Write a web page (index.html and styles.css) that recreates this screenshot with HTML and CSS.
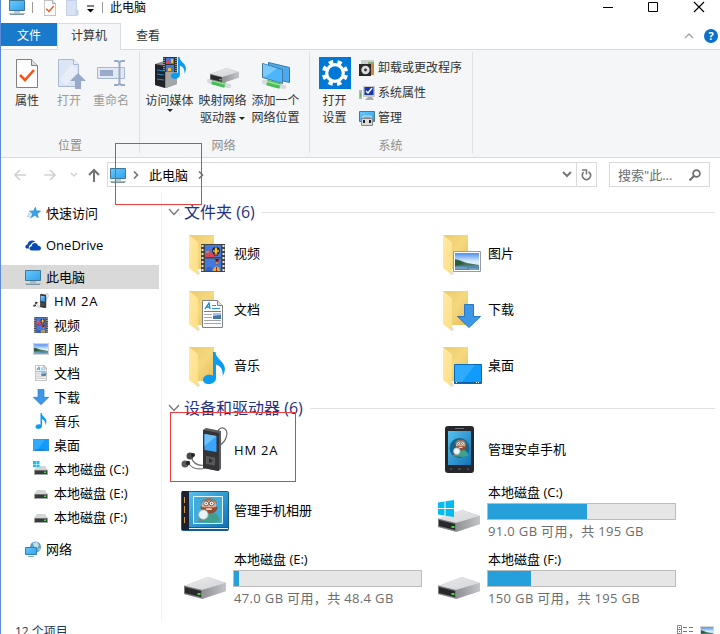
FILE: index.html
```
<!DOCTYPE html>
<html lang="zh-CN">
<head>
    <meta charset="utf-8">
    <title>此电脑</title>
    <link rel="stylesheet" href="styles.css">
</head>
<body>
    <!-- shared icons -->
    <svg class="sprite" width="0" height="0">
        <defs>
            <linearGradient id="screen" x1="0" y1="0" x2="1" y2="1">
                <stop offset="0" stop-color="#68c8fb"/><stop offset=".5" stop-color="#4db5f5"/><stop offset="1" stop-color="#2da3f0"/>
            </linearGradient>
            <linearGradient id="fback" x1="0" y1="0" x2="1" y2="1">
                <stop offset="0" stop-color="#eccb6c"/><stop offset=".5" stop-color="#f5d87e"/><stop offset="1" stop-color="#e3ba59"/>
            </linearGradient>
            <linearGradient id="fflap" x1="0" y1="0" x2="1" y2="1">
                <stop offset="0" stop-color="#ffe9a5"/><stop offset="1" stop-color="#fcdf85"/>
            </linearGradient>
            <linearGradient id="metal" x1="0" y1="0" x2="1" y2="1">
                <stop offset="0" stop-color="#e9e9eb"/><stop offset="1" stop-color="#d4d5d9"/>
            </linearGradient>
            <linearGradient id="side" x1="0" y1="0" x2="1" y2="0">
                <stop offset="0" stop-color="#8f9094"/><stop offset="1" stop-color="#c4c5c8"/>
            </linearGradient>
            <linearGradient id="sky" x1="0" y1="0" x2="0" y2="1">
                <stop offset="0" stop-color="#4f8ff0"/><stop offset=".5" stop-color="#d9ecfb"/>
            </linearGradient>
            <linearGradient id="cover" x1="0" y1="0" x2="1" y2="1">
                <stop offset="0" stop-color="#56c1ee"/><stop offset="1" stop-color="#1272b4"/>
            </linearGradient>
        </defs>

        <symbol id="pc" viewBox="0 0 16 16">
            <path d="M.5 1.500h15v10H.5z" fill="url(#screen)" stroke="#3f7896"/>
            <path d="M5 13h6M1 15.500h14" stroke="#7896a8"/><path d="M0 14.500h16" stroke="#a9bdca"/>
        </symbol>
        <symbol id="star" viewBox="0 0 16 16">
            <path d="M9.500 1.500l1.300 4.100 4.700.2-3.700 2.800 1 4.700-3.800-2.600-4.200 2.400 1.500-4.300L3 5.700l4.500-.1z" fill="#35a3ea" stroke="#1b83cd" stroke-width=".7"/>
            <path d="M2 6.500h3M1 9h4M0 11.500h4M3 13.500h2" stroke="#5bbdf2"/>
        </symbol>
        <symbol id="cloud" viewBox="0 0 16 16">
            <path d="M1.500 11.500C-.3 11 0 7.500 2.600 7.500 2.800 4 7.500 2 10.300 5 7.800 4.800 6.300 6 5.800 7.800 3.700 8.200 3.500 10.500 4.300 11.500z" fill="#094ab2"/>
            <path d="M6.500 13.500C3.600 13.300 4 9.300 6.700 9.200 7 5.200 12.300 4.800 13 8.700 16.500 8.500 17 13 14 13.500z" fill="#094ab2"/>
        </symbol>
        <symbol id="player" viewBox="0 0 48 48">
            <path d="M35 13c0-9 5-13 9-10s1 13-5 16" fill="none" stroke="#6c6c6c" stroke-width="1.200"/>
            <path d="M6 36c6 8 12 8 18 6M10 30c2 8 8 10 14 9" fill="none" stroke="#777" stroke-width="1.200"/>
            <path d="M22 4l3-2 15 3v38l-3 2-15-3z" fill="#5b5b5d"/>
            <path d="M22 4l16 3v38l-16-3z" fill="#343436"/>
            <path d="M23.500 8l12 2v16l-12-2z" fill="#3ba5fa"/><path d="M23.500 8l12 2-12 10z" fill="#6fc0fb"/>
            <path d="M25 30l9 1.500v8L25 38z" fill="#59595b"/><path d="M28 32l4 3-4 2z" fill="#29292a"/>
            <circle cx="9" cy="30" r="3.500" fill="#4b4b4b"/><circle cx="12" cy="29" r="2" fill="#222"/>
            <circle cx="4" cy="38" r="3.500" fill="#5a5a5a"/><circle cx="7" cy="37" r="2.200" fill="#262626"/>
        </symbol>
        <symbol id="film" viewBox="0 0 24 28" preserveAspectRatio="none">
            <path d="M0 0h24v28H0z" fill="#444"/>
            <path d="M1.500 1v27M22.500 1v27" stroke="#e4e4e4" stroke-width="2" stroke-dasharray="2 2"/>
            <path d="M4 1h16v12H4zM4 14.500h16V27H4z" fill="#4479dc"/>
            <path d="M4 9l3-3 4 3 3 4H4z" fill="#d84458"/><path d="M5 8h3" stroke="#6ed7a2"/>
            <path d="M15 3a4 4 0 0 1 4 4c0 2-2 3-2.500 5h-3C13 10 11 9 11 7a4 4 0 0 1 4-4z" fill="#262530"/>
            <path d="M15 3c-2 2-2 6 0 9 2-3 2-7 0-9z" fill="#f4c631"/><path d="M12 7h1.500M16.500 7H18" stroke="#f4c631" stroke-width="1.500"/><path d="M13 10h4" stroke="#d43c30"/>
            <path d="M13 15h6l-1.500 3-1.500 3-1.500-3z" fill="#ce362e"/><path d="M14 15h4l-2 3z" fill="#262530"/><path d="M15.500 18h1v2h-1z" fill="#f4c631"/>
            <path d="M5 25c1-3 5-3 6 0v2H5z" fill="#3461b8"/><path d="M12 27c0-6 7-6 7 0z" fill="#e5b529"/><path d="M15 23h1v4h-1z" fill="#b22b2b"/>
        </symbol>
        <symbol id="photo" viewBox="0 0 28 21" preserveAspectRatio="none">
            <path d="M.5.500h27v20H.5z" fill="#fff" stroke="#9b9b9b"/>
            <path d="M2 2h24v17H2z" fill="url(#sky)"/>
            <path d="M2 8l4 1 8 3 12 2v2H2z" fill="#48725a"/><path d="M2 9l5 1 4 3-9 2z" fill="#2c5a3d"/>
            <path d="M2 15l24-1v5H2z" fill="#5588ae"/><path d="M2 17h12M16 18h9" stroke="#8db5cf"/>
        </symbol>
        <symbol id="doc" viewBox="0 0 21 28" preserveAspectRatio="none">
            <path d="M.5.500h15l5 5v22H.5z" fill="#fdfdfd" stroke="#808284"/><path d="M15.500.500v5h5" fill="#e3e3e3" stroke="#808284"/>
            <path d="M3 9l4-6 1 6M4 7h4" stroke="#1b84d1" stroke-width="1.300" fill="none"/><path d="M10 5.500h4M10 8.500h8M2 11.500h17" stroke="#2a92d8"/>
            <path d="M2 14.500h8M2 17.500h8M2 20.500h17M2 23.500h17" stroke="#a6a6a6"/><path d="M11 13h8v6h-8z" fill="#4176a5"/><path d="M11 13h8v2l-8 1z" fill="#9fc7eb"/>
        </symbol>
        <symbol id="down" viewBox="0 0 24 24">
            <path d="M7.500.500h9v12h7L12 23.500.500 12.500h7z" fill="#3e97e6" stroke="#2478c5"/>
        </symbol>
        <symbol id="note" viewBox="0 0 22 32">
            <path d="M10 0h2.500c.5 7 8.500 9 9.300 16 .3 3-.8 6-2.300 8 1-6-2-10-6.500-11.500V26c0 4-4 6-7.500 6S0 30 0 27.500C0 23.500 6 21.500 10 23.500z" fill="#0a9bf3"/>
        </symbol>
        <symbol id="desk" viewBox="0 0 28 20" preserveAspectRatio="none">
            <path d="M.5.500h27v19H.5z" fill="#119bfb" stroke="#0a6ab5"/><path d="M1 1h20L8 18H1z" fill="#2faafc"/><path d="M1 18.500h26" stroke="#0860a5"/><path d="M2 18.500h1M22 18.500h4" stroke="#fff" stroke-dasharray="1 1"/>
        </symbol>
        <symbol id="drive" viewBox="0 0 42 22">
            <path d="M0 9L24 0l18 6v8L18 22 0 17z" fill="#b5b6ba"/>
            <path d="M0 9L24 0l18 6-24 7z" fill="url(#metal)"/><path d="M18 13l24-7v8l-24 8z" fill="url(#side)"/>
            <path d="M0 8.500l18 4.500v8.500L0 17z" fill="#7d7e80"/><path d="M1 10l16 4v6L1 16z" fill="#29292b"/>
            <path d="M13.500 16h3v2h-3z" fill="#3fdd3a"/>
        </symbol>
        <symbol id="minidrive" viewBox="0 0 16 16">
            <path d="M4 5h8l3 4H1z" fill="#d3d4d6"/><path d="M1 9h14v5H1z" fill="#a3a4a7"/><path d="M2 9.500h12V13H2z" fill="#38393b"/><path d="M11 10.500h2v1.500h-2z" fill="#3be144"/>
        </symbol>
        <symbol id="winlogo" viewBox="0 0 16 17">
            <path d="M0 2.500L6.500 1.500v6.500H0zM7.500 1.300L16 0v8H7.500zM0 9h6.500v6.500L0 14.500zM7.500 9H16v8l-8.500-1.300z" fill="#00bcf2"/>
        </symbol>
        <symbol id="net" viewBox="0 0 16 16">
            <circle cx="10.500" cy="6" r="5.500" fill="#5ba0c6"/><path d="M8 2l4-1 2 3-2 4-3-2zM13 8l2-1-1 3z" fill="#c2dfe8"/>
            <path d="M.5 6.500h11v7H.5z" fill="url(#screen)" stroke="#2d83b8"/><path d="M3 15.500h6" stroke="#83aabd"/>
        </symbol>
        <symbol id="folder" viewBox="0 0 48 48">
            <path d="M8 5h25v34H12z" fill="url(#fback)"/><path d="M16 38l3 6-3 1z" fill="#ddd"/><path d="M8 5l9 7v33l-9-7z" fill="url(#fflap)"/>
        </symbol>
        <symbol id="checkdoc" viewBox="0 0 22 29">
            <path d="M.5.500h15l6 6v22H.5z" fill="#fdfdfd" stroke="#7e8082"/><path d="M15.500.500v6h6" fill="#ddd" stroke="#7e8082"/>
            <path d="M4 16l5 5 9-10" fill="none" stroke="#f0571c" stroke-width="2.600"/>
        </symbol>
        <symbol id="plug" viewBox="0 0 24 10">
            <path d="M2 3l20 5" stroke="#d8dbdd" stroke-width="4.500" stroke-linecap="round"/><path d="M5 3.500l13 3.500" stroke="#48bd55" stroke-width="5.500"/><path d="M5 2.500l13 3.500" stroke="#93e79c" stroke-width="1.500"/>
        </symbol>
        <symbol id="geezer" viewBox="0 0 28 28">
            <path d="M4 27c1-8 6-11 12-11s10 4 11 10l-8 2z" fill="#40a08b"/>
            <circle cx="15" cy="9" r="7.500" fill="#e9b393"/><path d="M6 8c0-9 18-9 18 0l-3-4H9z" fill="#8c7266"/>
            <path d="M6 10c3 2 5 1 9 1s6 1 9-1c1 5-4 8-9 8S6 15 6 10z" fill="#914b33"/>
            <circle cx="12" cy="7" r="2.600" fill="#fff" stroke="#66513f"/><circle cx="18" cy="7" r="2.600" fill="#fff" stroke="#66513f"/><path d="M11.500 7h1M17.500 7h1" stroke="#222" stroke-width="1.500"/>
            <path d="M12 13h6" stroke="#f2cbb3" stroke-width="2"/>
            <circle cx="9" cy="19" r="5.200" fill="#e8f4f6" stroke="#9aa9ad"/><path d="M6 24l-2 3" stroke="#bc6d43" stroke-width="2"/>
        </symbol>
        <symbol id="chev" viewBox="0 0 12 8"><path d="M1 1l5 5.500L11 1" fill="none" stroke="currentColor" stroke-width="1.300"/></symbol>
        <symbol id="next" viewBox="0 0 6 8"><path d="M1 .5L4.500 4 1 7.500" fill="none" stroke="currentColor" stroke-width="1.700"/></symbol>
    </svg>

    <div class="window">
        <div class="titlebar">
            <svg class="t-pc" width="16" height="16"><use href="#pc"/></svg>
            <span class="t-sep"></span>
            <svg class="t-check" width="12" height="16"><use href="#checkdoc"/></svg>
            <svg class="t-new" width="13" height="16"><path d="M.5.500h10v15H.5z" fill="#d7e3f5" stroke="#c3d2ea"/><path d="M9.500 9.500h3v6h-3z" fill="#c3d2ea"/></svg>
            <svg class="t-drop" width="7" height="8"><path d="M0 1h7" stroke="#000" stroke-width="1"/><path d="M0 4h7L3.500 7.500z"/></svg>
            <span class="t-sep"></span>
            <span class="title">此电脑</span>
            <svg class="controls" width="102" height="12"><path d="M0 6.500h10M45.500 1.500h9v9h-9z" fill="none" stroke="#000"/><path d="M91 1l10 10M101 1L91 11" stroke="#000" stroke-width="1.200"/></svg>
        </div>

        <div class="tabs">
            <span class="tab file">文件</span>
            <span class="tab active">计算机</span>
            <span class="tab">查看</span>
            <svg class="collapse" width="10" height="6"><path d="M1 5l4-4 4 4" fill="none" stroke="#a5a5a5" stroke-width="1.300"/></svg>
            <span class="help">?</span>
        </div>

        <div class="ribbon">
            <div class="group location">
                <div class="buttons">
                    <div class="big">
                        <svg width="32" height="32"><use href="#checkdoc" x="5" y="2" width="22" height="29"/></svg>
                        <span>属性</span>
                    </div>
                    <div class="big off">
                        <svg width="32" height="32"><path d="M5.500 2.500h15l5 5v22h-20z" fill="#dce5f3" stroke="#a9b9d5"/><path d="M20.500 2.500v5h5" fill="#edf2fa" stroke="#a9b9d5"/><path d="M7 22L19 7l5 5v9L12 28z" fill="#e8eef8"/><path d="M25 16l8 8h-5v8h-6v-8h-5z" fill="#98a9c9"/></svg>
                        <span>打开</span>
                    </div>
                    <div class="big off">
                        <svg width="32" height="32"><path d="M2.500 10.500h27v11h-27z" fill="#e2e9f5" stroke="#a8b7d3"/><path d="M5 13h13v6H5z" fill="#9aabca"/><path d="M19 4h3q2 0 2.500 2Q25 4 27 4h3M24.500 4v24M19 28h3q2 0 2.500-2 .5 2 2.500 2h3" fill="none" stroke="#99a9c8" stroke-width="2"/></svg>
                        <span>重命名</span>
                    </div>
                </div>
                <div class="caption">位置</div>
            </div>
            <div class="group network">
                <div class="buttons">
                    <div class="big">
                        <svg width="32" height="32"><path d="M1 7l12-4 10 3v21l-11 4-11-3z" fill="#88898b"/><path d="M1 7l10 2v22L1 28z" fill="#212329"/><path d="M12 9l11-3v21l-11 4z" fill="#a3a5a7"/><path d="M3 13l7 1M3 17l7 1M3 22l7 1" stroke="#2788ce"/><path d="M9 0h14v15H9z" fill="#333"/><path d="M10 1v14M22 1v14" stroke="#ddd" stroke-dasharray="1 1"/><path d="M12 1h8v6h-8zM12 8h8v7h-8z" fill="#4479dc"/><path d="M12 5l3-2 2 4h-5z" fill="#d84458"/><path d="M17 2h2v4h-2zM14 11h3v3h-3z" fill="#edc23a"/><use href="#note" x="17" y="0" width="15" height="22"/></svg>
                        <span>访问媒体</span>
                        <i class="arrow"></i>
                    </div>
                    <div class="big">
                        <svg width="32" height="32"><use href="#plug" x="0" y="21" width="24" height="10"/><use href="#drive" x="3" y="10" width="29" height="17"/></svg>
                        <span>映射网络</span>
                        <span>驱动器 <i class="arrow inline"></i></span>
                    </div>
                    <div class="big">
                        <svg width="32" height="32"><path d="M8.500 5.500l21 5v15l-21-5z" fill="#49aaf1" stroke="#397ba5"/><path d="M2.500 6.500l20 6v14l-20-6z" fill="#4db5fb" stroke="#46799b"/><path d="M3 7l14 4.500L5 20l-2-1z" fill="#7bcafc"/><use href="#plug" x="2" y="22" width="24" height="10"/></svg>
                        <span>添加一个</span>
                        <span>网络位置</span>
                    </div>
                </div>
                <div class="caption">网络</div>
            </div>
            <div class="group system">
                <div class="buttons">
                    <div class="big">
                        <svg width="32" height="32"><path d="M0 0h32v32H0z" fill="#0078d7"/><circle cx="16" cy="16" r="8.300" fill="none" stroke="#fff" stroke-width="3.200"/><circle cx="16" cy="16" r="11.300" fill="none" stroke="#fff" stroke-width="3.600" stroke-dasharray="4.440 4.440" stroke-dashoffset="-2.200"/></svg>
                        <span>打开</span>
                        <span>设置</span>
                    </div>
                    <div class="smalls">
                        <div class="small"><svg width="16" height="16"><path d="M2 0h13v10H2z" fill="#c8cfca"/><path d="M9 2h6v13H9z" fill="#83ab75"/><path d="M12 4h3v11h-3z" fill="#d4853b"/><path d="M0 4h12v12H0z" fill="#292929"/><circle cx="6.500" cy="10" r="4.200" fill="#ddd"/><circle cx="6.500" cy="10" r="1.400" fill="#333"/></svg>卸载或更改程序</div>
                        <div class="small"><svg width="16" height="16"><path d="M0 5h3v9H0z" fill="#b1b7b4"/><path d="M1 8h1v4H1z" fill="#66b453"/><path d="M4 1h12v11H4z" fill="#cacac8"/><path d="M5.500 2h9v8h-9z" fill="#1737b2"/><path d="M7 6l2 2 4-5" fill="none" stroke="#fff" stroke-width="1.500"/><path d="M9 12h4l2 3H6z" fill="#aaa"/></svg>系统属性</div>
                        <div class="small"><svg width="16" height="16"><path d="M.5 1.500h15v10H.5z" fill="url(#screen)" stroke="#427c9d"/><path d="M4 8V6h8v2" fill="none" stroke="#ddd"/><path d="M2.500 8.500h11v7h-11z" fill="#d9d9d9" stroke="#85898b"/><path d="M5 10v3M11 10v3" stroke="#222" stroke-width="2"/></svg>管理</div>
                    </div>
                </div>
                <div class="caption">系统</div>
            </div>
        </div>

        <div class="navbar">
            <svg class="arrows" width="88" height="14">
                <path d="M12 7H1M6 2L1 7l5 5M30 7h11M36 2l5 5-5 5" fill="none" stroke="#d2d2d2" stroke-width="1.700"/>
                <path d="M57 5l3 3 3-3" fill="none" stroke="#d2d2d2" stroke-width="1.500"/>
                <path d="M80 14V2M75 7l5-5 5 5" fill="none" stroke="#737373" stroke-width="2"/>
            </svg>
            <div class="address">
                <svg width="16" height="16"><use href="#pc"/></svg>
                <svg class="crumb" width="6" height="8"><use href="#next"/></svg>
                <span>此电脑</span>
                <svg class="crumb last" width="6" height="8"><use href="#next"/></svg>
                <svg class="history" width="10" height="7"><path d="M1 1l4 4 4-4" fill="none" stroke="#777" stroke-width="2"/></svg>
                <div class="refresh"><svg width="11" height="12"><path d="M7.500 2.700a4.200 4.200 0 1 1-4.800.5" fill="none" stroke="#777" stroke-width="1.700"/><path d="M1 1h4.500v4.500" fill="none" stroke="#777" stroke-width="1.500"/></svg></div>
            </div>
            <div class="search">
                <span>搜索"此...</span>
                <svg width="12" height="12"><circle cx="7.500" cy="4.500" r="3.400" fill="none" stroke="#6e6e6e" stroke-width="1.800"/><path d="M5 7l-4.500 4.500" stroke="#6e6e6e" stroke-width="2"/></svg>
            </div>
        </div>

        <div class="main">
            <div class="sidebar">
                <div class="node root"><svg width="16" height="16"><use href="#star" x="2" y="1" width="14" height="14"/></svg>快速访问</div>
                <div class="node root"><svg width="16" height="16"><use href="#cloud"/></svg>OneDrive</div>
                <div class="node root selected"><svg width="16" height="16"><use href="#pc"/></svg>此电脑</div>
                <div class="node"><svg width="16" height="16"><use href="#player"/></svg><span class="latin">HM 2A</span></div>
                <div class="node"><svg width="16" height="16"><use href="#film" x="1" width="14" height="16"/></svg>视频</div>
                <div class="node"><svg width="16" height="16"><use href="#photo" y="2" width="16" height="12"/></svg>图片</div>
                <div class="node"><svg width="16" height="16"><use href="#doc" x="2" width="12" height="16"/></svg>文档</div>
                <div class="node"><svg width="16" height="16"><use href="#down"/></svg>下载</div>
                <div class="node"><svg width="16" height="16"><use href="#note"/></svg>音乐</div>
                <div class="node"><svg width="16" height="16"><use href="#desk" y="2" width="16" height="12"/></svg>桌面</div>
                <div class="node"><svg width="16" height="16"><use href="#minidrive"/><path d="M0 0h3v3H0zM3.500 0h3v3h-3zM0 3.500h3v2.500H0zM3.500 3.500h3v2.500h-3z" fill="#12bff0"/></svg>本地磁盘 (C:)</div>
                <div class="node"><svg width="16" height="16"><use href="#minidrive"/></svg>本地磁盘 (E:)</div>
                <div class="node"><svg width="16" height="16"><use href="#minidrive"/></svg>本地磁盘 (F:)</div>
                <div class="node root last"><svg width="16" height="16"><use href="#net"/></svg>网络</div>
            </div>

            <div class="content">
                <div class="heading"><svg width="12" height="8"><use href="#chev"/></svg>文件夹 (6)</div>
                <div class="tiles">
                    <div class="tile"><svg width="48" height="48"><use href="#folder"/><use href="#film" x="20" y="14" width="24" height="28"/></svg><span>视频</span></div>
                    <div class="tile"><svg width="48" height="48"><use href="#folder"/><use href="#photo" x="18" y="21" width="28" height="21"/></svg><span>图片</span></div>
                    <div class="tile"><svg width="48" height="48"><use href="#folder"/><use href="#doc" x="21" y="14" width="21" height="28"/></svg><span>文档</span></div>
                    <div class="tile"><svg width="48" height="48"><use href="#folder"/><use href="#down" x="22" y="18" width="24" height="24"/></svg><span>下载</span></div>
                    <div class="tile"><svg width="48" height="48"><use href="#folder"/><use href="#note" x="22" y="10" width="22" height="32"/></svg><span>音乐</span></div>
                    <div class="tile"><svg width="48" height="48"><use href="#folder"/><use href="#desk" x="19" y="22" width="28" height="20"/></svg><span>桌面</span></div>
                </div>
                <div class="heading"><svg width="12" height="8"><use href="#chev"/></svg>设备和驱动器 (6)</div>
                <div class="tiles">
                    <div class="tile"><svg width="48" height="48"><use href="#player"/></svg><span class="latin">HM 2A</span></div>
                    <div class="tile"><svg width="48" height="48"><rect x="10" width="29" height="47" rx="3" fill="#25272c"/><path d="M13 5h23v34H13z" fill="url(#cover)"/><circle cx="24.500" cy="22" r="10" fill="#14648d"/><use href="#geezer" x="16" y="13" width="18" height="18"/><path d="M20 2.500h9M15 43h2M23 43h3M32 43h2" stroke="#6b6d72"/></svg><span>管理安卓手机</span></div>
                    <div class="tile tall"><svg width="48" height="48"><rect y="4" width="48" height="40" rx="2" fill="#155a93"/><path d="M7 5h40v35H7z" fill="url(#cover)"/><path d="M1 4h7v39H1z" fill="#1d2030"/><path d="M3.500 10v6M3.500 19v7M3.500 30v6" stroke="#d79b43"/><path d="M8 41.500h39" stroke="#e5f3fa"/><path d="M12.500 9.500h29v27h-29z" fill="#3facdc" stroke="#e2f4fb"/><use href="#geezer" x="14" y="10" width="26" height="26"/></svg><span>管理手机相册</span></div>
                    <div class="tile tall">
                        <svg width="48" height="48"><use href="#drive" x="3" y="23" width="42" height="22"/><use href="#winlogo" x="3" y="13" width="16" height="17"/></svg>
                        <div class="disk">
                            <div class="name">本地磁盘 (C:)</div>
                            <div class="bar"><div class="used" style="width: 99px"></div></div>
                            <div class="free">91.0 GB 可用，共 195 GB</div>
                        </div>
                    </div>
                    <div class="tile tall">
                        <svg width="48" height="48"><use href="#drive" x="3" y="23" width="42" height="22"/></svg>
                        <div class="disk">
                            <div class="name">本地磁盘 (E:)</div>
                            <div class="bar"><div class="used" style="width: 5px"></div></div>
                            <div class="free">47.0 GB 可用，共 48.4 GB</div>
                        </div>
                    </div>
                    <div class="tile tall">
                        <svg width="48" height="48"><use href="#drive" x="3" y="23" width="42" height="22"/></svg>
                        <div class="disk">
                            <div class="name">本地磁盘 (F:)</div>
                            <div class="bar"><div class="used" style="width: 43px"></div></div>
                            <div class="free">150 GB 可用，共 195 GB</div>
                        </div>
                    </div>
                </div>
            </div>
        </div>

        <div class="status">
            <span>12 个项目</span>
            <svg class="views" width="38" height="16"><path d="M.5.500h4v4h-4zM.5 4.500h4v4h-4z" fill="#fff" stroke="#888"/><path d="M2 2.500h1M2 6.500h1" stroke="#3566b0"/><path d="M6 2.500h4M12 2.500h4M6 6.500h4M12 6.500h4" stroke="#777"/><use href="#photo" x="23" y="1" width="14" height="11"/></svg>
        </div>

        <div class="mark mark-path"></div>
        <div class="mark mark-device"></div>
    </div>
</body>
</html>
```
FILE: styles.css
```
* {
    box-sizing: border-box;
}
body {
    margin: 0;
    overflow: hidden;
    background: #fff;
    color: #000;
    font-family: "Open Sans", "Noto Sans CJK SC", sans-serif;
    font-size: 13px;
}
svg {
    display: block;
    flex: none;
}
.sprite {
    position: absolute;
}
.window {
    position: relative;
    height: 634px;
    border-left: 1px solid #5b8bd6;
    overflow: hidden;
    white-space: nowrap;
}

/* title bar */
.titlebar {
    display: flex;
    align-items: flex-start;
    height: 23px;
    padding: 0 15px 0 8px;
    font-size: 12px;
}
.t-pc {
    margin-top: -1px;
}
.t-sep {
    width: 1px;
    height: 11px;
    margin: 2px 0 0 7px;
    background: #999;
}
.t-check {
    margin-left: 11px;
}
.t-new {
    margin-left: 10px;
}
.t-drop {
    margin: 5px 0 0 8px;
}
.titlebar .t-drop + .t-sep {
    margin-left: 8px;
}
.title {
    margin-left: 7px;
    line-height: 16px;
}
.controls {
    margin: 1px 0 0 auto;
}

/* tabs */
.tabs {
    position: relative;
    display: flex;
    align-items: flex-start;
    height: 27px;
    border-bottom: 1px solid #dadbdc;
    font-size: 12px;
    line-height: 25px;
    color: #333;
}
.tab {
    width: 54px;
    text-align: center;
}
.tab.file {
    width: 56px;
    height: 23px;
    background: #1979ca;
    color: #fff;
}
.tab.active {
    width: 64px;
    height: 27px;
    border: 1px solid #dadbdc;
    border-bottom: 0;
    background: #f5f6f7;
    line-height: 24px;
}
.collapse {
    margin: 10px 10px 0 auto;
}
.help {
    width: 14px;
    height: 14px;
    margin: 6px 2px 0 0;
    border-radius: 50%;
    background: #0b6fcc;
    color: #fff;
    font-size: 11px;
    font-weight: bold;
    line-height: 14px;
    text-align: center;
}

/* ribbon */
.ribbon {
    display: flex;
    height: 108px;
    padding: 2px 0 4px;
    border-bottom: 1px solid #dadbdc;
    background: #f5f6f7;
    color: #333;
    font-size: 12px;
}
.group {
    display: flex;
    flex-direction: column;
    justify-content: space-between;
    border-right: 1px solid #dfe0e2;
    padding: 5px 0 0 4px;
}
.location {
    width: 139px;
    padding-left: 5px;
}
.network {
    width: 170px;
    padding-left: 3px;
}
.system {
    width: 163px;
}
.buttons {
    display: flex;
}
.big {
    display: flex;
    flex-direction: column;
    align-items: center;
    width: 53px;
    line-height: 17px;
}
.location .big {
    width: 42px;
}
.system .big {
    width: 41px;
}
.big svg {
    margin-bottom: 3px;
    overflow: visible;
}
.off {
    color: #9a9a9a;
}
.arrow {
    width: 0;
    border: 3px solid transparent;
    border-top-color: #222;
    border-bottom: 0;
}
.arrow.inline {
    display: inline-block;
    vertical-align: 2px;
}
.smalls {
    display: flex;
    flex-direction: column;
    gap: 9px;
    padding: 3px 0 0 4px;
}
.small {
    display: flex;
    gap: 3px;
    line-height: 16px;
}
.caption {
    padding-right: 5px;
    line-height: 15px;
    color: #8f8f8f;
    text-align: center;
}

/* address row */
.navbar {
    display: flex;
    align-items: flex-start;
    height: 35px;
    padding: 4px 10px 0 13px;
}
.arrows {
    margin: 6px 5px 0 0;
}
.address {
    display: flex;
    align-items: center;
    width: 490px;
    height: 25px;
    padding-left: 2px;
    border: 1px solid #d9d9d9;
    color: #000;
    line-height: 22px;
}
.crumb {
    margin: 0 10px 0 7px;
    color: #777;
}
.crumb.last {
    margin: 0 0 0 10px;
}
.history {
    margin-left: auto;
    margin-right: 4px;
}
.refresh {
    display: flex;
    align-items: center;
    justify-content: center;
    width: 20px;
    height: 23px;
    border-left: 1px solid #d9d9d9;
}
.search {
    display: flex;
    align-items: center;
    justify-content: space-between;
    width: 101px;
    height: 25px;
    margin-left: auto;
    padding: 0 8px;
    border: 1px solid #d9d9d9;
    color: #6d6d6d;
}

/* navigation tree */
.main {
    display: flex;
    height: 428px;
}
.sidebar {
    width: 161px;
    padding: 8px 2px 0 0;
    border-right: 1px solid #f0f0f0;
}
.node {
    display: flex;
    align-items: center;
    gap: 5px;
    height: 24px;
    padding-left: 32px;
    line-height: 22px;
}
.root {
    margin-bottom: 8px;
    padding-left: 24px;
}
.root.selected {
    margin-bottom: 0;
    background: #d9d9d9;
}
.root.last {
    margin-top: 8px;
}
.latin {
    letter-spacing: .8px;
}

/* folders and drives */
.content {
    flex: 1;
    padding: 5px 5px 0 6px;
}
.heading {
    display: flex;
    align-items: center;
    height: 28px;
    color: #1e3287;
    font-size: 16px;
    line-height: 26px;
}
.heading svg {
    margin-right: 4px;
    color: #777;
}
.heading::after {
    content: "";
    flex: 1;
    height: 1px;
    margin-left: 7px;
    background: #e2e2e2;
}
.tiles {
    display: grid;
    grid-template-columns: 254px 254px;
    padding-left: 13px;
}
.tile {
    display: flex;
    gap: 4px;
    height: 56px;
    padding-top: 4px;
    line-height: 46px;
}
.tile > span,
.name,
.free {
    padding-left: 1px;
}
.tile > .latin {
    line-height: 48px;
}
.tall {
    height: 67px;
    padding-top: 9px;
}
.disk {
    margin-top: -4px;
}
.name {
    margin-bottom: 2px;
    line-height: 18px;
}
.bar {
    width: 189px;
    height: 17px;
    border: 1px solid #bcbcbc;
    background: #e6e6e6;
}
.used {
    height: 15px;
    background: #26a0da;
}
.free {
    line-height: 22px;
    letter-spacing: .35px;
    color: #6d6d6d;
}

.status {
    display: flex;
    justify-content: space-between;
    height: 24px;
    padding: 0 5px 0 14px;
    color: #1e395b;
    font-size: 12px;
    line-height: 22px;
}
.views {
    margin-top: 4px;
}

/* red highlight boxes */
.mark {
    position: absolute;
    border: 1px solid #f03c3c;
}
.mark-path {
    left: 114px;
    top: 143px;
    width: 87px;
    height: 62px;
}
.mark-device {
    left: 169px;
    top: 412px;
    width: 126px;
    height: 70px;
}
```
